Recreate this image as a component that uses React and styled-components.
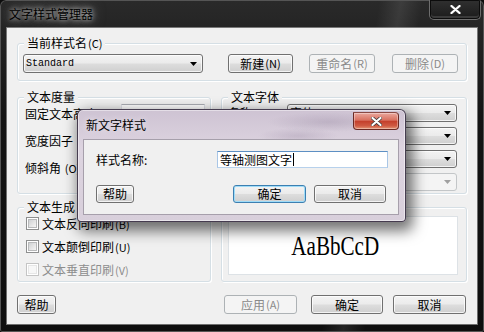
import React from 'react';
import styled, { createGlobalStyle } from 'styled-components';

const GlobalStyle = createGlobalStyle`
  html, body { margin: 0; padding: 0; background: #0d0d0d; }
  body {
    font-family: "Noto Sans CJK SC", "Liberation Sans", sans-serif;
    font-size: 12px;
    color: #000;
  }
  #root { width: 484px; height: 332px; }
`;

const Window = styled.div`
  position: relative;
  box-sizing: border-box;
  width: 484px;
  height: 332px;
  padding: 0 7px 8px 7px;
  display: flex;
  flex-direction: column;
  border-radius: 6px 6px 2px 2px;
  background:
    linear-gradient(100deg, rgba(255,255,255,0) 70%, rgba(255,255,255,0.09) 74%, rgba(255,255,255,0) 78%),
    linear-gradient(180deg, #2a2a2a 0%, #141414 35%, #0e0e0e 100%);
  box-shadow: inset 0 0 0 1px #555;
  overflow: hidden;
`;

const TitleBar = styled.div`
  height: 28px;
  display: flex;
  align-items: flex-start;
`;

const Title = styled.span`
  margin: 6px 0 0 0;
  padding: 0 2px;
  line-height: 16px;
  font-size: 12px;
  color: #000;
  text-shadow: 0 0 4px rgba(200,200,200,0.9), 0 0 9px rgba(170,170,170,0.9), 0 0 14px rgba(150,150,150,0.7);
`;

const WinClose = styled.div`
  margin-left: auto;
  margin-right: -4px;
  box-sizing: border-box;
  width: 52px;
  height: 20px;
  border: 1px solid #6d6d6d;
  border-top: none;
  border-radius: 0 0 5px 5px;
  box-shadow: inset 0 0 0 1px #0c0c0c, inset 0 -2px 0 1px #3a3a3a;
  background: linear-gradient(#303030, #1b1b1b);
  display: flex;
  align-items: center;
  justify-content: center;
`;

const Client = styled.div`
  flex: 1;
  box-sizing: border-box;
  background: #f0f0f0;
  box-shadow: 0 0 0 1px rgba(190,190,190,0.55);
  padding: 15px 10px 0 10px;
  display: flex;
  flex-direction: column;
`;

const Group = styled.div`
  position: relative;
  box-sizing: border-box;
  height: ${p => p.$h}px;
  border: 1px solid #d5dfe5;
  border-radius: 3px;
  box-shadow: inset 1px 1px 0 #fff, 1px 1px 0 #fff;
  padding: ${p => p.$pad || '0'};
  display: flex;
  flex-direction: ${p => (p.$row ? 'row' : 'column')};
  align-items: ${p => (p.$row ? 'flex-start' : 'stretch')};
  gap: ${p => p.$gap || 0}px;
`;

const Legend = styled.span`
  position: absolute;
  left: 6px;
  top: -8px;
  padding: 0 3px;
  background: #f0f0f0;
  line-height: 14px;
  white-space: nowrap;
`;

const Acc = styled.span`
  font-size: 11px;
  margin-left: 1px;
`;

const Btn = styled.div`
  box-sizing: border-box;
  flex: none;
  width: ${p => p.$w}px;
  height: ${p => p.$h || 19}px;
  margin-left: ${p => (p.$auto ? 'auto' : `${p.$ml || 0}px`)};
  margin-right: ${p => p.$mr || 0}px;
  line-height: 1;
  font-size: 12px;
  color: ${p => (p.$disabled ? '#8a8a8a' : '#000')};
  border: 1px solid ${p => (p.$disabled ? '#adb2b5' : p.$default ? '#3c7fb1' : '#707070')};
  border-radius: 3px;
  background: ${p =>
    p.$disabled
      ? '#f4f4f4'
      : 'linear-gradient(#f3f3f3 0%, #ebebeb 48%, #dddddd 52%, #cfcfcf 100%)'};
  box-shadow: inset 0 0 0 1px ${p =>
    p.$default ? '#9fdcf8' : p.$disabled ? '#f4f4f4' : 'rgba(255,255,255,0.75)'};
  display: flex;
  align-items: center;
  justify-content: center;
  white-space: nowrap;
`;

const Combo = styled.div`
  box-sizing: border-box;
  flex: none;
  width: ${p => p.$w}px;
  height: ${p => p.$h || 19}px;
  margin-right: ${p => p.$mr || 0}px;
  border: 1px solid ${p => (p.$disabled ? '#c3c6c8' : '#707070')};
  border-radius: 3px;
  background: ${p =>
    p.$disabled
      ? '#f4f4f4'
      : 'linear-gradient(#f3f3f3 0%, #ebebeb 48%, #dddddd 52%, #cfcfcf 100%)'};
  box-shadow: inset 0 0 0 1px ${p => (p.$disabled ? '#f4f4f4' : 'rgba(255,255,255,0.75)')};
  display: flex;
  align-items: center;
  padding: 0 5px 0 2px;
`;

const ComboText = styled.span`
  flex: 1;
  font-family: ${p => (p.$mono ? '"Liberation Mono", monospace' : 'inherit')};
  font-size: ${p => (p.$mono ? 10 : 12)}px;
  line-height: 1;
  white-space: nowrap;
  overflow: hidden;
`;

const Arrow = ({ disabled }) => (
  <svg width="7" height="4" viewBox="0 0 7 4" style={{ flex: 'none' }}>
    <polygon points="0,0 7,0 3.5,4" fill={disabled ? '#a0a0a0' : '#000'} />
  </svg>
);

const Columns = styled.div`
  margin-top: 16px;
  display: grid;
  grid-template-columns: 194px 246px;
  grid-template-rows: 97px 75px;
  column-gap: 10px;
  row-gap: 13px;
`;

const FieldRow = styled.div`
  height: 19px;
  display: flex;
  align-items: center;
`;

const Label = styled.span`
  flex: 1;
  line-height: 14px;
  white-space: nowrap;
  overflow: hidden;
`;

const TextBox = styled.div`
  box-sizing: border-box;
  flex: none;
  width: ${p => p.$w}px;
  height: ${p => p.$h || 19}px;
  margin-right: ${p => p.$mr || 0}px;
  background: #fff;
  border: 1px solid ${p => (p.$focus ? '#8db2d8' : '#abadb3')};
  border-color: ${p => (p.$focus ? '#5d8fc3 #a9c6e6 #b7d1ec #a9c6e6' : '#abadb3 #dbdfe6 #e3e9ef #e2e3ea')};
  display: flex;
  align-items: center;
  padding-left: 2px;
  line-height: 1;
  white-space: nowrap;
`;

const Caret = styled.span`
  display: inline-block;
  width: 1px;
  height: 13px;
  background: #000;
  margin-left: 1px;
`;

const CheckRow = styled.div`
  height: 13px;
  display: flex;
  align-items: center;
  gap: 3px;
  color: ${p => (p.$disabled ? '#8d8d8d' : '#000')};
`;

const CheckBox = styled.span`
  box-sizing: border-box;
  flex: none;
  width: 13px;
  height: 13px;
  border: 1px solid ${p => (p.$disabled ? '#c4c4c4' : '#8e8f8f')};
  background: #fff;
  padding: 1px;
  &::after {
    content: '';
    display: block;
    box-sizing: border-box;
    width: 9px;
    height: 9px;
    border: 1px solid ${p => (p.$disabled ? '#e6e6e6' : '#b8b9ba')};
    background: ${p =>
      p.$disabled ? '#f7f7f7' : 'linear-gradient(135deg, #cfd1d3 0%, #e7e7e7 60%, #f5f5f5 100%)'};
  }
`;

const CheckText = styled.span`
  line-height: 14px;
  white-space: nowrap;
`;

const PreviewBox = styled.div`
  flex: 1;
  background: #fff;
  border: 1px solid #dde2e6;
  display: flex;
  align-items: center;
  justify-content: center;
  padding-right: 16px;
`;

const PreviewText = styled.span`
  display: inline-block;
  font-family: "Liberation Serif", serif;
  font-size: 27px;
  line-height: 1;
  margin-top: 2px;
  transform: scaleX(0.78);
  color: #000;
`;

const BottomRow = styled.div`
  margin-top: 13px;
  display: flex;
  align-items: center;
`;

const Dialog = styled.div`
  position: absolute;
  left: 77px;
  top: 109px;
  width: 329px;
  height: 113px;
  box-sizing: border-box;
  border: 1px solid rgba(45, 35, 55, 0.85);
  border-radius: 6px 6px 4px 4px;
  background:
    radial-gradient(ellipse 60px 10px at 250px 12px, rgba(150,135,160,0.35), rgba(150,135,160,0) 100%),
    radial-gradient(ellipse 40px 8px at 220px 26px, rgba(150,135,160,0.3), rgba(150,135,160,0) 100%),
    linear-gradient(180deg, #cec3d3 0%, #ddd4e0 35%, #d8cfdb 100%);
  box-shadow: 4px 6px 14px 3px rgba(0, 0, 0, 0.55), inset 0 0 0 1px rgba(255,255,255,0.45);
  display: flex;
  flex-direction: column;
  padding: 0 6px 6px 5px;
`;

const DialogBar = styled.div`
  height: 29px;
  display: flex;
  align-items: flex-start;
`;

const DialogTitle = styled.span`
  margin: 8px 0 0 3px;
  line-height: 14px;
  color: #000;
  text-shadow: 0 0 6px rgba(255,255,255,0.7);
`;

const RedClose = styled.div`
  margin: 2px 0 0 auto;
  box-sizing: border-box;
  width: 46px;
  height: 18px;
  border: 1px solid #6a2a24;
  border-top-color: #8a4a44;
  border-radius: 0 4px 4px 4px;
  background: linear-gradient(180deg, #eaa89e 0%, #d8705f 45%, #c4402c 52%, #cf5a42 80%, #e49676 100%);
  box-shadow: inset 0 0 0 1px rgba(255,255,255,0.35);
  display: flex;
  align-items: center;
  justify-content: center;
`;

const DialogClient = styled.div`
  flex: 1;
  box-sizing: border-box;
  background: #f0f0f0;
  border: 1px solid #a69fab;
  padding: 11px 10px 0 12px;
  display: flex;
  flex-direction: column;
`;

const DialogRow = styled.div`
  height: ${p => p.$h}px;
  margin-top: ${p => p.$mt || 0}px;
  display: flex;
  align-items: center;
`;

const XGlyph = ({ w = 11, h = 9 }) => (
  <svg width={w} height={h} viewBox="0 0 11 9">
    <path d="M1.5 1 L9.5 8 M9.5 1 L1.5 8" stroke="#3a3a3a" strokeWidth="3.6" strokeLinecap="round" />
    <path d="M1.5 1 L9.5 8 M9.5 1 L1.5 8" stroke="#fff" strokeWidth="2.2" strokeLinecap="round" />
  </svg>
);

export default function App() {
  return (
    <>
      <GlobalStyle />
      <Window>
        <TitleBar>
          <Title>文字样式管理器</Title>
          <WinClose>
            <XGlyph />
          </WinClose>
        </TitleBar>

        <Client>
          <Group $h={38} $row $pad="10px 0 0 5px">
            <Legend>当前样式名<Acc>(C)</Acc></Legend>
            <Combo $w={180} $mr={25}>
              <ComboText $mono>Standard</ComboText>
              <Arrow />
            </Combo>
            <Btn $w={65}>新建<Acc>(N)</Acc></Btn>
            <Btn $w={66} $ml={16} $disabled>重命名<Acc>(R)</Acc></Btn>
            <Btn $w={66} $ml={17} $disabled>删除<Acc>(D)</Acc></Btn>
          </Group>

          <Columns>
            <Group $pad="6px 5px 0 7px" $gap={8}>
              <Legend>文本度量</Legend>
              <FieldRow>
                <Label>固定文本高度<Acc>(T)</Acc>:</Label>
                <TextBox $w={84}>0.0000</TextBox>
              </FieldRow>
              <FieldRow>
                <Label>宽度因子 <Acc>(W)</Acc>:</Label>
                <TextBox $w={84}>1.0000</TextBox>
              </FieldRow>
              <FieldRow>
                <Label>倾斜角 <Acc>(O)</Acc>:</Label>
                <TextBox $w={84}>0</TextBox>
              </FieldRow>
            </Group>

            <Group $pad="5px 9px 0 6px" $gap={4}>
              <Legend>文本字体</Legend>
              <FieldRow>
                <Label>名称<Acc>(N)</Acc>:</Label>
                <Combo $w={170} $h={18}>
                  <ComboText>宋体</ComboText>
                  <Arrow />
                </Combo>
              </FieldRow>
              <FieldRow>
                <Label>样式<Acc>(Y)</Acc>:</Label>
                <Combo $w={170} $h={18}>
                  <ComboText>常规</ComboText>
                  <Arrow />
                </Combo>
              </FieldRow>
              <FieldRow>
                <Label>语言<Acc>(L)</Acc>:</Label>
                <Combo $w={170} $h={18}>
                  <ComboText>CHINESE_GB2312</ComboText>
                  <Arrow />
                </Combo>
              </FieldRow>
              <FieldRow>
                <Label>大字体<Acc>(B)</Acc>:</Label>
                <Combo $w={170} $h={18} $disabled>
                  <ComboText />
                  <Arrow disabled />
                </Combo>
              </FieldRow>
            </Group>

            <Group $pad="9px 0 0 8px" $gap={10}>
              <Legend>文本生成</Legend>
              <CheckRow>
                <CheckBox />
                <CheckText>文本反向印刷<Acc>(B)</Acc></CheckText>
              </CheckRow>
              <CheckRow>
                <CheckBox />
                <CheckText>文本颠倒印刷<Acc>(U)</Acc></CheckText>
              </CheckRow>
              <CheckRow $disabled>
                <CheckBox $disabled />
                <CheckText>文本垂直印刷<Acc>(V)</Acc></CheckText>
              </CheckRow>
            </Group>

            <Group $pad="8px 8px 6px 6px">
              <PreviewBox>
                <PreviewText>AaBbCcD</PreviewText>
              </PreviewBox>
            </Group>
          </Columns>

          <BottomRow>
            <Btn $w={39}>帮助</Btn>
            <Btn $w={73} $auto $disabled>应用<Acc>(A)</Acc></Btn>
            <Btn $w={72} $ml={14}>确定</Btn>
            <Btn $w={73} $ml={10} $mr={1}>取消</Btn>
          </BottomRow>
        </Client>

        <Dialog>
          <DialogBar>
            <DialogTitle>新文字样式</DialogTitle>
            <RedClose>
              <XGlyph />
            </RedClose>
          </DialogBar>
          <DialogClient>
            <DialogRow $h={17}>
              <Label>样式名称:</Label>
              <TextBox $w={171} $h={17} $focus>
                等轴测图文字<Caret />
              </TextBox>
            </DialogRow>
            <DialogRow $h={18} $mt={17}>
              <Btn $w={38} $h={18}>帮助</Btn>
              <Btn $w={73} $h={18} $auto $default>确定</Btn>
              <Btn $w={72} $h={18} $ml={8} $mr={2}>取消</Btn>
            </DialogRow>
          </DialogClient>
        </Dialog>
      </Window>
    </>
  );
}
